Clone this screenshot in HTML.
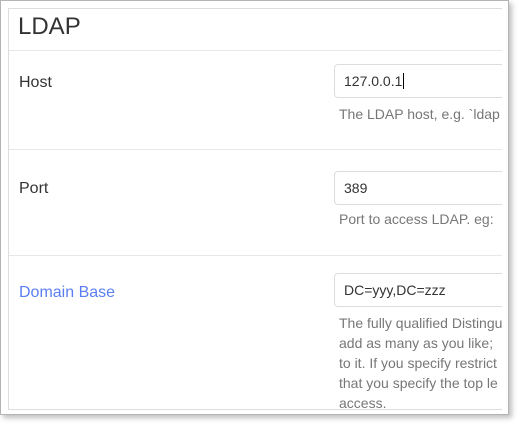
<!DOCTYPE html>
<html><head><style>
*{margin:0;padding:0;box-sizing:border-box}
body{width:520px;height:428px;background:#fff;position:relative;overflow:hidden;font-family:"Liberation Sans",Arial,sans-serif}
.win{position:absolute;left:0;top:0;width:509px;height:415px;border:1px solid #b4b4b4;background:#fff;box-shadow:3px 3px 5px rgba(0,0,0,.25)}
.panel{position:absolute;left:7px;top:7px;width:494px;height:402px;border:1px solid #ddd;border-right:none;overflow:hidden}
.t{position:absolute;left:9px;top:4px;font-size:24px;color:#333}
.hr{position:absolute;left:0;right:0;height:1px;background:#e8e8e8}
.lbl{position:absolute;left:10px;font-size:16px;color:#333}
.inp{position:absolute;left:325px;width:200px;height:34px;border:1px solid #ddd;border-radius:4px;font-size:14px;color:#333;padding:8px 0 0 9px}
.help{position:absolute;left:330px;width:163px;font-size:14px;line-height:20px;color:#777;white-space:nowrap;overflow:hidden}
</style></head><body>
<div class="win"><div class="panel">
<div class="t">LDAP</div>
<div class="hr" style="top:41px"></div>
<div class="lbl" style="top:65px">Host</div>
<div class="inp" style="top:55px">127.0.0.1<span style="border-left:1px solid #000;margin-left:1px"></span></div>
<div class="help" style="top:95px">The LDAP host, e.g. `ldap</div>
<div class="hr" style="top:140px"></div>
<div class="lbl" style="top:171px">Port</div>
<div class="inp" style="top:162px">389</div>
<div class="help" style="top:200px">Port to access LDAP. eg:</div>
<div class="hr" style="top:246px"></div>
<div class="lbl" style="top:275px;color:#5b7ff0">Domain Base</div>
<div class="inp" style="top:264px">DC=yyy,DC=zzz</div>
<div class="help" style="top:304px">The fully qualified Distingu<br>add as many as you like;<br>to it. If you specify restrict<br>that you specify the top le<br>access.</div>
</div></div>
</body></html>
